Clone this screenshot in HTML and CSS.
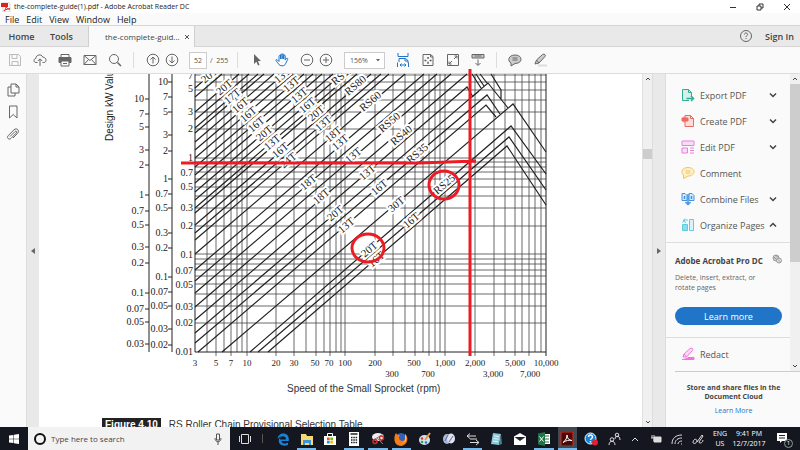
FILE: index.html
```
<!DOCTYPE html>
<html lang="en">
<head>
    <meta charset="UTF-8">
    <meta name="viewport" content="width=device-width, initial-scale=1.0">
    <title>the-complete-guide(1).pdf - Adobe Acrobat Reader DC</title>
    <link rel="stylesheet" href="styles.css">
</head>
<body>
    <header class="titlebar">
        <svg class="app-icon" viewBox="0 0 10 10"><path d="M2 0h5l2 2v8H2z" fill="#fff" stroke="#bbb" stroke-width=".6"/><path d="M0 1h7v4H0z" fill="#e2231a"/><path d="M3 9c2-2 2-4 2-5 0 2 2 3 4 3-2 0-4 0-6 2z" fill="none" stroke="#e2231a"/></svg>
        <span class="window-title">the-complete-guide(1).pdf - Adobe Acrobat Reader DC</span>
        <div class="window-buttons">
            <button aria-label="Minimize"><svg viewBox="0 0 8 8"><path d="M1 4.500h6"/></svg></button>
            <button aria-label="Restore"><svg viewBox="0 0 8 8"><path d="M1 3h4v4H1zM3 3V1h4v4H5"/></svg></button>
            <button aria-label="Close"><svg viewBox="0 0 8 8"><path d="M1 1l6 6M7 1L1 7"/></svg></button>
        </div>
    </header>

    <nav class="menubar">
        <button>File</button>
        <button>Edit</button>
        <button>View</button>
        <button>Window</button>
        <button>Help</button>
    </nav>

    <div class="tabbar">
        <button class="tab-home">Home</button>
        <button class="tab-tools">Tools</button>
        <div class="tab-doc">
            <span>the-complete-guid...</span>
            <button aria-label="Close tab"><svg viewBox="0 0 6 6"><path d="M1 1l4 4M5 1L1 5"/></svg></button>
        </div>
        <button class="help" aria-label="Help"><svg viewBox="0 0 14 14"><circle cx="7" cy="7" r="5.500"/><path d="M5.400 5.500c0-2 3.200-2 3.200 0 0 1.200-1.600 1-1.600 2.500M7 9v1"/></svg></button>
        <button class="sign-in">Sign In</button>
    </div>

    <div class="toolbar">
        <div class="group wide">
            <button class="disabled" aria-label="Save"><svg viewBox="0 0 14 14"><path d="M1.500 1.500h9l2 2v9h-11zM4 1.500v4h5v-4M4 12.500v-4h6v4"/></svg></button>
            <button aria-label="Upload"><svg viewBox="0 0 14 14"><path d="M4.500 9.500H3C.4 9.500.2 6 2.800 5.500 3 1.500 8.500.5 9.800 4.200c4 0 4.200 5.300 1 5.300H9.500M7 13V6M4.800 8L7 5.800 9.200 8"/></svg></button>
            <button aria-label="Print"><svg viewBox="0 0 14 14"><path d="M3 4V1.500h8V4" /><path d="M1 4.500h12v5H1z" fill="#666"/><path d="M3 8h8v5H3z" fill="#fafafa"/><path d="M5 10.500h4"/></svg></button>
            <button aria-label="Email"><svg viewBox="0 0 14 14"><path d="M1 2.500h12v9H1zM1 2.500l6 5 6-5M1 11.500l4.500-5M13 11.500l-4.500-5"/></svg></button>
            <button aria-label="Find"><svg viewBox="0 0 14 14"><circle cx="6" cy="6" r="4.500"/><path d="M9.500 9.500l3.500 3.500" stroke-width="1.500"/></svg></button>
        </div>
        <span class="sep"></span>
        <div class="group">
            <button aria-label="Previous page"><svg viewBox="0 0 14 14"><circle cx="7" cy="7" r="5.800"/><path d="M7 10.500v-6M4.500 6.500L7 4l2.500 2.500"/></svg></button>
            <button aria-label="Next page"><svg viewBox="0 0 14 14"><circle cx="7" cy="7" r="5.800"/><path d="M7 3.500v6M4.500 7.500L7 10l2.500-2.500"/></svg></button>
        </div>
        <input class="page-number" type="text" value="52" aria-label="Page number">
        <span class="page-count">/&nbsp; 255</span>
        <span class="sep"></span>
        <div class="group wide">
            <button aria-label="Select"><svg viewBox="0 0 14 14"><path d="M4 1l7 7H8l1.500 4-1.500.6L6.400 8.800 4 11z" fill="#666" stroke="none"/></svg></button>
            <button class="active" aria-label="Hand"><svg viewBox="0 0 14 14"><path d="M4 8.500V3.200c0-1 1.500-1 1.500 0V6 1.800c0-1 1.600-1 1.600 0V6 1.500c0-1 1.600-1 1.600 0V6 2.800c0-1 1.500-1 1.500 0V7l1-1.500c1-.8 1.900 0 1.500.8l-2.200 4.500c-.8 1.600-1.500 2-3.500 2C4 12.800 3.600 11 1 7.500.6 6.600 1.600 6 2.500 7z" /></svg></button>
        </div>
        <div class="group magnify">
            <button aria-label="Zoom out"><svg viewBox="0 0 14 14"><circle cx="7" cy="7" r="5.800"/><path d="M4 7h6"/></svg></button>
            <button aria-label="Zoom in"><svg viewBox="0 0 14 14"><circle cx="7" cy="7" r="5.800"/><path d="M4 7h6M7 4v6"/></svg></button>
        </div>
        <div class="zoom">
            <select aria-label="Zoom level"><option>156%</option></select>
            <svg viewBox="0 0 6 4"><path d="M1 1h4L3 3.500z"/></svg>
        </div>
        <div class="group wide view">
            <button class="active" aria-label="Fit width"><svg viewBox="0 0 14 14"><path d="M2 0v3.500h10V0M3 9V5.500h6.500l2.500 2V10M9 5.500V8h3M1.500 9.500V14M12.500 9.500V14M4 12h6M5.500 10.500L4 12l1.500 1.500M8.500 10.500L10 12l-1.500 1.500"/></svg></button>
            <button aria-label="Fit page"><svg viewBox="0 0 14 14"><path d="M2 1.500h7.500l2.500 2v9H2zM9.500 1.500V4H12M7 4v2M7 8.500v2.200M3.500 7.500h2M8.500 7.500h2"/><path d="M6 4.800h2M6 10h2M4.300 6.500v2M9.800 6.500v2"/></svg></button>
            <button aria-label="Full screen"><svg viewBox="0 0 14 14"><path d="M1.500 1.500h11v11h-11z"/><path d="M8 6l3-3M8.500 3H11v2.500M6 8l-3 3M3 8.500V11h2.500"/></svg></button>
            <button aria-label="Scrolling"><svg viewBox="0 0 14 14"><path d="M1 1.500h12v3.500H1z" fill="#ccc"/><path d="M3.500 3h7M7 6.500V12M4.500 10L7 12.500 9.500 10"/></svg></button>
        </div>
        <span class="sep"></span>
        <div class="group wide notes">
            <button aria-label="Add comment"><svg viewBox="0 0 14 14"><path d="M7 2c8 0 8 8.500 0 8.500L3 13v-3C-1 8 .5 2 7 2z" fill="#ccc"/><path d="M4.500 5h5M4.500 7h5"/></svg></button>
            <button aria-label="Highlight"><svg viewBox="0 0 14 14"><path d="M2 11l1.500-4L9.500 1.500c2-1 3.500.5 2.500 2L6 10z" fill="#ccc"/><path d="M3.500 7L6 10"/><path d="M5 12.500h9" stroke="#ddd" stroke-width="2"/></svg></button>
        </div>
    </div>

    <main class="workspace">
        <aside class="rail">
            <button aria-label="Page thumbnails"><svg viewBox="0 0 14 14"><path d="M5 1h5l3 3v6H5zM10 1v3h3M5 4H2v9h7v-3"/></svg></button>
            <button aria-label="Bookmarks"><svg viewBox="0 0 14 14"><path d="M3.500 1h7.500v12L7.200 9.500 3.500 13z"/></svg></button>
            <button aria-label="Attachments"><svg viewBox="0 0 14 14"><path d="M4 9.500l5-5c1.200-1 2.400.3 1.400 1.400L5 11.400C2.800 13.300.3 10.800 2.200 8.600L8 2.800c2.800-2.500 6 .7 3.600 3.500L7 11" /></svg></button>
        </aside>
        <button class="collapse" aria-label="Open navigation pane"><svg viewBox="0 0 4 6"><path d="M4 0v6L0 3z"/></svg></button>

        <article class="page">
            <svg class="chart" viewBox="100 74 460 306" role="img" aria-label="RS Roller Chain Provisional Selection Table">
                <defs><clipPath id="visible"><path d="M100 74h460v306H100z"/></clipPath></defs>
                <path class="grid" d="M207 74V352M216 74V356M224 74V352M231 74V356M237 74V352M242 74V352M247 74V356M276 74V356M294 74V356M306 74V352M316 74V356M324 74V352M330 74V356M336 74V352M341 74V352M345 74V356M375 74V356M393 74V356M405 74V352M415 74V356M423 74V352M429 74V356M435 74V352M440 74V352M445 74V356M475 74V356M494 74V356M505 74V352M515 74V356M522 74V352M529 74V356M535 74V352M541 74V352"/>
                <path class="grid" d="M195 75H546M195 82H546M195 90H546M195 100H546M195 112H546M195 129H546M195 158H546M195 162H546M195 167H546M195 172H546M195 179H546M195 187H546M195 196H546M195 208H546M195 226H546M195 254H546M195 259H546M195 264H546M195 270H546M195 276H546M195 284H546M195 294H546M195 306H546M195 323H546"/>
                <path class="axis" d="M195 74V352H546V74M149 74V352M172 74V352M546 352V356"/>
                <path class="axis" d="M145 99h4M145 114h4M145 127h4M145 150h4M145 165h4M145 195h4M145 211h4M145 225h4M145 247h4M145 263h4M145 293h4M145 309h4M145 322h4M145 344h4M168 82h4M168 97h4M168 112h4M168 135h4M168 151h4M168 179h4M168 194h4M168 208h4M168 233h4M168 248h4M168 277h4M168 292h4M168 306h4M168 329h4M168 345h4"/>
                <path class="curve" d="M195 88L211 74M195 97L222 74M195 112L239 74M195 120L249 74M195 128L258 74M195 133L264 74M195 142L274 74M195 150L284 74M195 158L293 74M195 167L304 74M195 175L313 74M195 183L322 74M195 192L333 74M195 200L342 74M195 208L351 74M195 213L357 74M195 225L371 74M195 233L381 74M195 240L389 74M195 254L405 74M195 270L424 74M195 281L437 74M195 293L451 74M195 307L467 74"/>
                <path class="curve" d="M195 320L467 87L473 97M195 333L488 83L508 108M472 97L479 91M195 343L487 95L500 114M198 352L486 105L496 117M222 352L513 104L546 152M250 352L511 126L546 174M258 352L509 137L546 190M268 352L507 146L546 205M472 74L481 88M476 74L484 86M480 74L487 83M491 74L501 90V99"/>

                <g class="diagonal" clip-path="url(#visible)">
                    <text transform="translate(209 75) rotate(-40)">20T</text>
                    <text transform="translate(224 87) rotate(-40)">20T</text>
                    <text transform="translate(232 96) rotate(-40)">17T</text>
                    <text transform="translate(240 105) rotate(-40)">16T</text>
                    <text transform="translate(248 114) rotate(-40)">16T</text>
                    <text transform="translate(256 124) rotate(-40)">16T</text>
                    <text transform="translate(264 133) rotate(-40)">20T</text>
                    <text transform="translate(272 142) rotate(-40)">13T</text>
                    <text transform="translate(280 150) rotate(-40)">16T</text>
                    <text transform="translate(288 160) rotate(-40)">24T</text>
                    <text transform="translate(282 75) rotate(-40)">13T</text>
                    <text transform="translate(291 84) rotate(-40)">13T</text>
                    <text transform="translate(299 95) rotate(-40)">13T</text>
                    <text transform="translate(307 105) rotate(-40)">16T</text>
                    <text transform="translate(316 113) rotate(-40)">20T</text>
                    <text transform="translate(323 123) rotate(-40)">13T</text>
                    <text transform="translate(333 134) rotate(-40)">18T</text>
                    <text transform="translate(340 142) rotate(-40)">13T</text>
                    <text transform="translate(353 155) rotate(-40)">13T</text>
                    <text transform="translate(344 73) rotate(-40)">RS100</text>
                    <text transform="translate(355 85) rotate(-40)">RS80</text>
                    <text transform="translate(370 101) rotate(-40)">RS60</text>
                    <text transform="translate(389 122) rotate(-40)">RS50</text>
                    <text transform="translate(401 135) rotate(-40)">RS40</text>
                    <text transform="translate(417 153) rotate(-40)">RS35</text>
                    <text transform="translate(444 184) rotate(-40)">RS25</text>
                    <text transform="translate(308 182) rotate(-40)">18T</text>
                    <text transform="translate(321 196) rotate(-40)">18T</text>
                    <text transform="translate(335 213) rotate(-40)">20T</text>
                    <text transform="translate(346 225) rotate(-40)">13T</text>
                    <text transform="translate(367 172) rotate(-40)">13T</text>
                    <text transform="translate(379 187) rotate(-40)">16T</text>
                    <text transform="translate(396 204) rotate(-40)">30T</text>
                    <text transform="translate(411 220) rotate(-40)">16T</text>
                    <text transform="translate(376 259) rotate(-40)">16T</text>
                    <text transform="translate(369 249) rotate(-40)">20T</text>
                </g>

                <g class="scale">
                    <text x="144" y="102">10</text><text x="144" y="117">7</text><text x="144" y="130">5</text><text x="144" y="153">3</text><text x="144" y="168">2</text><text x="144" y="198">1</text><text x="144" y="214">0.7</text><text x="144" y="228">0.5</text><text x="144" y="250">0.3</text><text x="144" y="266">0.2</text><text x="144" y="296">0.1</text><text x="144" y="312">0.07</text><text x="144" y="325">0.05</text><text x="144" y="347">0.03</text>
                    <text x="168" y="85">10</text><text x="168" y="100">7</text><text x="168" y="115">5</text><text x="168" y="138">3</text><text x="168" y="154">2</text><text x="168" y="182">1</text><text x="168" y="197">0.7</text><text x="168" y="211">0.5</text><text x="168" y="236">0.3</text><text x="168" y="251">0.2</text><text x="168" y="280">0.1</text><text x="168" y="295">0.07</text><text x="168" y="309">0.05</text><text x="168" y="332">0.03</text><text x="168" y="348">0.02</text>
                    <text x="193" y="79" clip-path="url(#visible)">7</text><text x="193" y="92">5</text><text x="193" y="115">3</text><text x="193" y="132">2</text><text x="193" y="161">1</text><text x="193" y="176">0.7</text><text x="193" y="190">0.5</text><text x="193" y="211">0.3</text><text x="193" y="229">0.2</text><text x="193" y="258">0.1</text><text x="193" y="274">0.07</text><text x="193" y="288">0.05</text><text x="193" y="310">0.03</text><text x="193" y="326">0.02</text><text x="193" y="355">0.01</text>
                </g>
                <g class="speeds">
                    <text x="195" y="366">3</text><text x="216" y="366">5</text><text x="231" y="366">7</text><text x="247" y="366">10</text><text x="276" y="366">20</text><text x="294" y="366">30</text><text x="315" y="366">50</text><text x="329" y="366">70</text><text x="345" y="366">100</text><text x="375" y="366">200</text><text x="414" y="366">500</text><text x="445" y="366">1,000</text><text x="475" y="366">2,000</text><text x="515" y="366">5,000</text><text x="546" y="366">10,000</text>
                    <text x="392" y="377">300</text><text x="428" y="377">700</text><text x="493" y="377">3,000</text><text x="530" y="377">7,000</text>
                </g>
                <g clip-path="url(#visible)"><text class="axis-title" transform="translate(113 141) rotate(-90)">Design kW Value</text></g>

                <g class="marks">
                    <path d="M181 163H420L476 161M470 69V356"/>
                    <ellipse cx="444" cy="185" rx="15" ry="14"/>
                    <ellipse cx="368" cy="248" rx="16" ry="14"/>
                </g>
            </svg>
            <p class="speed-title">Speed of the Small Sprocket (rpm)</p>
            <p class="caption"><b>Figure 4.10</b>RS Roller Chain Provisional Selection Table</p>
        </article>

        <div class="scrollbar doc-scroll">
            <svg viewBox="0 0 6 4"><path d="M1 3l2-2 2 2"/></svg>
            <span class="thumb"></span>
            <svg viewBox="0 0 6 4"><path d="M1 1l2 2 2-2"/></svg>
        </div>
        <button class="collapse" aria-label="Close tools pane"><svg viewBox="0 0 4 6"><path d="M0 0v6l4-3z"/></svg></button>

        <aside class="tools">
            <div class="tools-body">
                <div class="tools-list">
                    <button class="tool">
                        <svg class="tool-icon" viewBox="0 0 14 14" stroke="#2fae8f" fill="#d5efe8"><path d="M8 12.500H1.500v-11h6l3 3V8M7.500 1.500v3h3"/><path d="M5.500 10.500H12M10 8l2.500 2.500L10 13" fill="none" stroke-width="1.500"/></svg>
                        <span>Export PDF</span><svg class="chevron" viewBox="0 0 8 6"><path d="M1 1.500l3 3 3-3"/></svg>
                    </button>
                    <button class="tool">
                        <svg class="tool-icon" viewBox="0 0 14 14" stroke="#ec6a60" fill="#fadedb"><path d="M4 1.500h5.500l3 3v8H4zM9.500 1.500v3h3"/><path d="M1 4h6v3H1zM3 2.500v6" fill="#ec6a60"/></svg>
                        <span>Create PDF</span><svg class="chevron" viewBox="0 0 8 6"><path d="M1 1.500l3 3 3-3"/></svg>
                    </button>
                    <button class="tool">
                        <svg class="tool-icon" viewBox="0 0 14 14" stroke="#e881dc" fill="#f9dcf5"><path d="M1 1h12v4.500H1zM1 8h5.500v5H1zM9 8h4M9 10.500h4M9 13h4"/></svg>
                        <span>Edit PDF</span><svg class="chevron" viewBox="0 0 8 6"><path d="M1 1.500l3 3 3-3"/></svg>
                    </button>
                    <button class="tool">
                        <svg class="tool-icon" viewBox="0 0 14 14" stroke="#f6c453" fill="#fdf0cf"><path d="M7 1.500c8 0 8 8.500 0 8.500L2.500 12.500V9C-1 6 1.500 1.500 7 1.500zM4.500 5h5M4.500 7h5"/></svg>
                        <span>Comment</span>
                    </button>
                    <button class="tool">
                        <svg class="tool-icon" viewBox="0 0 14 14" stroke="#4593e0" fill="#d9e9fa"><path d="M6 8.500H1v-7h3l2 2zM8 8.500h5v-5l-2-2H8z"/><path d="M7 2v10M4.500 10L7 12.500 9.500 10M3.500 4v3M10.500 4v3" fill="none" stroke-width="1.500"/></svg>
                        <span>Combine Files</span><svg class="chevron" viewBox="0 0 8 6"><path d="M1 1.500l3 3 3-3"/></svg>
                    </button>
                    <button class="tool">
                        <svg class="tool-icon" viewBox="0 0 14 14" stroke="#5fcde0" fill="#d8f4f8"><path d="M8.500 1.500h4v11h-4z"/><path d="M1.500 6.500h5v6h-5z" fill="#8cdde9"/><path d="M1.500 4.500L4 2h3M4 .5L2 3l3 1.500" fill="none"/></svg>
                        <span>Organize Pages</span><svg class="chevron" viewBox="0 0 8 6"><path d="M1 4.500l3-3 3 3"/></svg>
                    </button>
                </div>
                <section class="promo">
                    <div class="promo-head">
                        <h2>Adobe Acrobat Pro DC</h2>
                        <svg viewBox="0 0 10 10"><circle cx="4" cy="4" r="3" fill="#ccc"/><circle cx="7" cy="6.500" r="2.500" fill="#ddd"/><path d="M1.500 2.500l3 3M4 1.500l2 2M6 5.500l2 2"/></svg>
                    </div>
                    <p>Delete, insert, extract, or rotate pages</p>
                    <button class="learn">Learn more</button>
                </section>
                <button class="tool redact">
                    <svg class="tool-icon" viewBox="0 0 14 14" stroke="#f274dc" fill="#fbdcf6"><path d="M2 10l1-3 6-5.500c2-1 3.500.5 2.500 2L5.500 10zM3 7l2.500 3"/><path d="M7 10.500h6v2H1" fill="#f274dc"/></svg>
                    <span>Redact</span>
                </button>
            </div>
            <div class="scrollbar tools-scroll">
                <svg viewBox="0 0 6 4"><path d="M1 3l2-2 2 2"/></svg>
                <span class="thumb"></span>
                <svg viewBox="0 0 6 4"><path d="M1 1l2 2 2-2"/></svg>
            </div>
            <footer class="cloud">
                <strong>Store and share files in the Document Cloud</strong>
                <a href="#">Learn More</a>
            </footer>
        </aside>
    </main>

    <footer class="taskbar">
        <button class="start" aria-label="Start"><svg viewBox="0 0 10 10"><path d="M0 1.500l4.500-.6v3.800H0zM5 .8L10 0v4.700H5zM0 5.200h4.500V9L0 8.400zM5 5.200h5V10l-5-.8z" fill="#fff"/></svg></button>
        <label class="search">
            <svg viewBox="0 0 14 14"><circle cx="7" cy="7" r="5" fill="none" stroke="#111" stroke-width="2"/></svg>
            <input type="text" placeholder="Type here to search" aria-label="Type here to search">
            <svg viewBox="0 0 14 14"><path d="M5.500 2h3v6h-3zM4 6c0 5 6 5 6 0M7 10v3" fill="none" stroke="#555"/></svg>
        </label>
        <button class="task-view" aria-label="Task view"><svg viewBox="0 0 14 14"><path d="M3.500 2.500h7v9h-7zM1.500 4v6M12.500 4v6" fill="none" stroke="#ddd"/></svg></button>
        <span class="task-sep"></span>
        <div class="apps">
            <button aria-label="Edge"><svg viewBox="0 0 14 14"><path d="M4 7.500h6C10 3 4 3.500 1.500 7 2 0 12.500-.5 12.800 7v2H5.500c.5 3 4.500 3 6.500 1.500v2.300C8 15 1.500 13 3 7.500 3.200 6 5 5 6 5 4.500 5.500 4 6.500 4 7.500z" fill="#1683d8"/></svg></button>
            <button class="open" aria-label="File Explorer"><svg viewBox="0 0 14 14"><path d="M1 2h5l1 2h6v9H1z" fill="#f8d775"/><path d="M3 8h8v5H9v-2H5v2H3z" fill="#3b97d8"/></svg></button>
            <button aria-label="Store"><svg viewBox="0 0 14 14"><path d="M4.500 4V1.500h5V4" fill="none" stroke="#fff"/><path d="M1 4h12v9H1z" fill="#fff"/><path d="M4 5.500h2.700v2.700H4z" fill="#f25022"/><path d="M7.300 5.500H10v2.700H7.300z" fill="#7fba00"/><path d="M4 8.800h2.700v2.700H4z" fill="#00a4ef"/><path d="M7.300 8.800H10v2.700H7.300z" fill="#ffb900"/></svg></button>
            <button class="open" aria-label="Calculator"><svg viewBox="0 0 14 14"><path d="M2 0h10v14H2z" fill="#fff"/><path d="M3.500 2h7M4 5.500h1.500M6.300 5.500h1.500M8.600 5.500h1.500M4 8h1.500M6.300 8h1.500M8.600 8h1.500M4 10.500h1.500M6.300 10.500h1.500M8.600 10.500h1.500" stroke="#222" stroke-width="1.500"/></svg></button>
            <button class="open" aria-label="Snipping Tool"><svg viewBox="0 0 14 14"><ellipse cx="7" cy="5" rx="6" ry="4" fill="#eee"/><path d="M2 8l9-5M6 6l6 6" stroke="#888"/><circle cx="4" cy="9.500" r="2" fill="none" stroke="#d82c2c" stroke-width="1.500"/><circle cx="10.500" cy="6" r="2" fill="none" stroke="#d82c2c" stroke-width="1.500"/></svg></button>
            <button class="open" aria-label="Firefox"><svg viewBox="0 0 14 14"><circle cx="7" cy="7" r="6" fill="#3260bc"/><path d="M2 1c1 2 2 2 4 2-2 2-1 6 2 6 2 0 3-1 3-3 1 0 1-2 0-4 4 3 3 11-4 12C0 14-1 6 2 1z" fill="#f57c18"/><path d="M11 2c3 4 1 9-4 10 3-1 5-4 4-7z" fill="#ffd23e"/></svg></button>
            <button aria-label="Paint"><svg viewBox="0 0 14 14"><ellipse cx="6.500" cy="8" rx="5.500" ry="5" fill="#cfe3f0"/><circle cx="4" cy="6.500" r="1.300" fill="#d83b32"/><circle cx="4" cy="10" r="1.300" fill="#3c9b45"/><circle cx="8" cy="10.500" r="1.300" fill="#2f75c8"/><path d="M7 8l5-7" stroke="#e59a3c" stroke-width="2"/></svg></button>
            <button aria-label="Photos"><svg viewBox="0 0 14 14"><ellipse cx="5" cy="7" rx="4" ry="5" fill="#a9b9d7"/><ellipse cx="9" cy="6.500" rx="4" ry="5" fill="#dfe2ee"/><path d="M3 9l3-6M7 10l4-6" stroke="#5a6795"/></svg></button>
            <button class="open" aria-label="Converter"><svg viewBox="0 0 14 14"><path d="M1 4h9M1 4l3-2.500M1 4l3 2.500M4 7h7M13 10.500H4M13 10.500L10 8M13 10.500L10 13" fill="none" stroke="#ddd"/></svg></button>
            <button aria-label="Notepad"><svg viewBox="0 0 14 14"><path d="M4 1l8 1-2 11-8-1z" fill="#8bcadb"/><path d="M5 4l5 .6M4.500 6.500l5 .6M4 9l5 .6" stroke="#e6f5f8"/><path d="M12 2l1 10-3 1z" fill="#527b88"/></svg></button>
            <button aria-label="Mail"><svg viewBox="0 0 14 14"><path d="M1 4.500L7 1l6 3.500V13H1z" fill="#fff"/><path d="M1.500 5h11L7 9z" fill="#20242c"/></svg></button>
            <button class="open" aria-label="Excel"><svg viewBox="0 0 14 14"><path d="M6 2h7v10H6z" fill="#fff"/><path d="M8 4h4M8 7h4M8 10h4" stroke="#217346"/><path d="M1 1.500L8 0v14l-7-1.500z" fill="#217346"/><path d="M2.500 4.500l4 5M6.500 4.500l-4 5" stroke="#fff"/></svg></button>
            <button class="open current" aria-label="Acrobat Reader"><svg viewBox="0 0 14 14"><path d="M1 0h12v14H1z" fill="#4c0707" stroke="#d52b24"/><path d="M3 10.500c3-2 4-5 4-7.500 0 3 2 5.500 5 5.500-3-.8-6 0-9 2z" fill="none" stroke="#fff"/></svg></button>
            <button aria-label="Get Help"><svg viewBox="0 0 14 14"><circle cx="6.500" cy="6.500" r="5.500" fill="#1683d8" stroke="#fff"/><path d="M4.500 5c0-3 4-2.500 4 0 0 1.500-2 1.500-2 3M6.500 9v1.500" fill="none" stroke="#fff" stroke-width="1.500"/><circle cx="11" cy="10.500" r="3" fill="#e3202b"/></svg></button>
        </div>
        <div class="tray">
            <button aria-label="People"><svg viewBox="0 0 14 14"><path d="M2 13c0-5 6-5 6 0M8 7c0-4 5-4 5 1" /><circle cx="5" cy="7.500" r="1.800"/><circle cx="10" cy="3" r="1.800"/></svg></button>
            <button aria-label="Show hidden icons"><svg viewBox="0 0 14 14"><path d="M4 9l3-3 3 3"/></svg></button>
            <button aria-label="Battery"><svg viewBox="0 0 14 14"><path d="M5 5h7v5H5z" fill="#ddd"/><path d="M3 3v3M5 3v3M2 6h4v2H4"/></svg></button>
            <button aria-label="Wi-Fi"><svg viewBox="0 0 14 14"><path d="M2 12C2 6 6 3 12 3M5 12c0-4 3-6 7-6M8 12c0-2 2-3 4-3M11 12h1"/></svg></button>
            <button aria-label="Pen"><svg viewBox="0 0 14 14"><path d="M2 10c1-4 4-3 4-1s-4 4-4 1zM6 10l5-7 1 1-4 6c0 2 4 1 4-2"/></svg></button>
        </div>
        <div class="lang"><span>ENG</span><span>US</span></div>
        <div class="clock"><span>9:41 PM</span><span>12/7/2017</span></div>
        <button class="notify" aria-label="Notifications"><svg viewBox="0 0 14 14"><path d="M1 1h10v8H6l-2 2V9H1z" fill="#fff"/><path d="M3 3.500h6M3 6h6" stroke="#222"/></svg><span class="badge">1</span></button>
    </footer>
</body>
</html>
```
FILE: styles.css
```
* {
    box-sizing: border-box;
}
body {
    margin: 0;
    height: 100vh;
    display: flex;
    flex-direction: column;
    overflow: hidden;
    background: #fafafa;
    color: #444;
    font-family: "Open Sans", "Noto Sans", sans-serif;
    font-size: 9px;
}
button {
    margin: 0;
    padding: 0;
    border: none;
    background: none;
    color: inherit;
    font: inherit;
    display: flex;
    align-items: center;
    justify-content: center;
}
p, h2 {
    margin: 0;
}
svg {
    display: block;
    flex: none;
}

/* title and menu */
.titlebar {
    display: flex;
    align-items: center;
    height: 13px;
    padding-left: 1px;
    background: #fff;
    color: #222;
}
.app-icon {
    width: 10px;
    height: 10px;
    margin-right: 3px;
}
.window-title {
    flex: 1;
    font-size: 7px;
}
.window-buttons {
    display: flex;
}
.window-buttons button {
    width: 27px;
}
.window-buttons svg {
    width: 8px;
    height: 8px;
    fill: none;
    stroke: #333;
}
.menubar {
    display: flex;
    gap: 7px;
    height: 12px;
    padding-left: 5px;
    color: #222;
}

/* tabs */
.tabbar {
    display: flex;
    height: 22px;
    background: #e9e9e9;
    border-top: 1px solid #d5d5d5;
    border-bottom: 1px solid #d5d5d5;
    font-weight: 600;
}
.tab-home {
    width: 43px;
}
.tab-tools {
    width: 37px;
}
.tab-doc {
    display: flex;
    align-items: center;
    justify-content: space-between;
    width: 107px;
    height: 21px;
    margin-left: 8px;
    padding: 0 4px 0 16px;
    background: #fafafa;
    border-left: 1px solid #d0d0d0;
    border-right: 1px solid #d0d0d0;
    font-size: 8px;
    font-weight: 400;
}
.tab-doc svg {
    width: 6px;
    height: 6px;
    stroke: #555;
}
.help {
    margin-left: auto;
    margin-right: 12px;
}
.help svg {
    width: 14px;
    height: 14px;
    fill: none;
    stroke: #666;
}
.sign-in {
    margin-right: 6px;
}

/* toolbar */
.toolbar {
    display: flex;
    align-items: center;
    height: 27px;
    padding-left: 2px;
    border-bottom: 1px solid #ddd;
}
.group {
    display: flex;
}
.group button {
    width: 19px;
    height: 24px;
}
.wide button {
    width: 25px;
}
.group svg, .rail svg {
    width: 14px;
    height: 14px;
    fill: none;
    stroke: #666;
}
.group .disabled svg {
    stroke: #bbb;
}
.group .active svg {
    stroke: #2175c9;
}
.sep {
    width: 1px;
    height: 16px;
    margin: 0 9px 0 6px;
    background: #ddd;
}
.page-number {
    width: 18px;
    height: 17px;
    margin-left: 8px;
    padding: 0;
    border: 1px solid #ccc;
    background: #fff;
    color: #555;
    font: 7px "Open Sans", sans-serif;
    text-align: center;
}
.page-count {
    width: 24px;
    padding-left: 3px;
    color: #555;
    font-size: 7px;
}
.page-count + .sep {
    margin-right: 6px;
}
.magnify {
    margin-left: 3px;
}
.zoom {
    display: grid;
    align-items: center;
    width: 41px;
    height: 17px;
    margin-left: 9px;
    border: 1px solid #ccc;
    background: #fff;
}
.zoom select, .zoom svg {
    grid-area: 1 / 1;
}
.zoom select {
    appearance: none;
    padding: 0 5px;
    border: none;
    background: none;
    color: #555;
    font: 7px "Open Sans", sans-serif;
}
.zoom svg {
    justify-self: end;
    width: 6px;
    height: 4px;
    margin-right: 3px;
    fill: #666;
    pointer-events: none;
}
.view {
    margin-left: 5px;
}
.notes {
    margin-left: -4px;
}

/* workspace */
.workspace {
    flex: 1;
    display: flex;
    min-height: 0;
}
.rail {
    display: flex;
    flex-direction: column;
    align-items: center;
    gap: 8px;
    width: 26px;
    padding-top: 9px;
}
.collapse {
    width: 13px;
    background: #e9e9e9;
    border-left: 1px solid #ddd;
}
.collapse svg {
    width: 4px;
    height: 6px;
    fill: #666;
}
.page {
    flex: 1;
    min-width: 0;
    padding-left: 61px;
    background: #fff;
    color: #333;
    font: 10px/14px "Liberation Sans", sans-serif;
}
.chart {
    width: 460px;
    overflow: visible;
}
.grid {
    fill: none;
    stroke: #444;
    stroke-width: 0.8;
}
.axis {
    fill: none;
    stroke: #222;
}
.curve {
    fill: none;
    stroke: #222;
    stroke-width: 1.2;
}
.chart text {
    font-family: "Liberation Serif", serif;
    fill: #222;
}
.diagonal text {
    font-size: 11px;
    text-anchor: middle;
    dominant-baseline: central;
    paint-order: stroke;
    stroke: #fff;
    stroke-width: 4;
}
.scale text {
    font-size: 10px;
    text-anchor: end;
}
.speeds text {
    font-size: 9px;
    text-anchor: middle;
}
.chart .axis-title {
    font-family: "Liberation Sans", sans-serif;
    font-size: 10px;
}
.marks {
    fill: none;
    stroke: #ed1c24;
    stroke-width: 3;
}
.speed-title {
    padding: 2px 0 0 187px;
}
.caption {
    display: flex;
    gap: 8px;
    margin-top: 22px;
    padding-left: 2px;
}
.caption b {
    padding: 0 3px;
    background: #222;
    color: #fff;
}

/* scrollbars */
.scrollbar {
    display: flex;
    flex-direction: column;
    align-items: center;
    width: 10px;
    background: #f0f0f0;
}
.scrollbar svg {
    width: 6px;
    height: 4px;
    margin: 3px 0;
    fill: none;
    stroke: #444;
}
.scrollbar svg:last-child {
    margin-top: auto;
}
.thumb {
    width: 100%;
    background: #cdcdcd;
}
.doc-scroll {
    border-left: 1px solid #e0e0e0;
}
.doc-scroll .thumb {
    height: 10px;
    margin-top: 65px;
}
.tools-scroll .thumb {
    flex: 0 0 178px;
}

/* tools panel */
.tools {
    display: grid;
    grid-template: 1fr 56px / 1fr 10px;
    width: 135px;
    border-left: 1px solid #ddd;
}
.tools-body {
    overflow: hidden;
}
.tools-list {
    padding: 8px 0 4px;
}
.tool {
    width: 100%;
    height: 26px;
    padding: 0 13px 0 15px;
    color: #555;
}
.tool span {
    flex: 1;
    text-align: left;
    white-space: nowrap;
}
.tool-icon {
    width: 14px;
    height: 14px;
    margin-right: 5px;
}
.chevron {
    width: 8px;
    height: 6px;
    fill: none;
    stroke: #444;
    stroke-width: 1.5;
}
.promo {
    height: 96px;
    padding: 11px 8px 0 9px;
    border-top: 1px solid #ddd;
    border-bottom: 1px solid #ddd;
}
.promo-head {
    display: flex;
    justify-content: space-between;
    height: 19px;
}
.promo h2 {
    font-size: 8px;
    font-weight: 700;
    line-height: 14px;
    white-space: nowrap;
}
.promo svg {
    width: 10px;
    height: 10px;
    fill: none;
    stroke: #999;
}
.promo p {
    width: 86px;
    height: 34px;
    color: #666;
    font-size: 7px;
    line-height: 10px;
}
.learn {
    width: 100%;
    height: 18px;
    border-radius: 9px;
    background: #2175c9;
    color: #fff;
}
.redact {
    height: 32px;
}
.cloud {
    grid-column: 1 / 3;
    display: flex;
    flex-direction: column;
    align-items: center;
    gap: 5px;
    margin-left: 9px;
    padding: 11px 8px 0 0;
    border-top: 1px solid #ccc;
    font-size: 7px;
    line-height: 9px;
    text-align: center;
}
.cloud a {
    color: #2175c9;
    text-decoration: none;
}

/* taskbar */
.taskbar {
    position: relative;
    z-index: 1;
    display: flex;
    align-items: stretch;
    height: 23px;
    background: #14171f;
    color: #fff;
}
.start {
    width: 28px;
}
.search {
    display: flex;
    align-items: center;
    width: 202px;
    padding: 0 5px;
    background: #f2f2f2;
}
.search input {
    flex: 1;
    min-width: 0;
    margin-left: 4px;
    padding: 0;
    border: none;
    background: none;
    font: 8px "Open Sans", sans-serif;
}
.search input::placeholder {
    color: #444;
}
.taskbar svg {
    width: 14px;
    height: 14px;
}
.taskbar .start svg {
    width: 10px;
    height: 10px;
}
.task-view {
    width: 29px;
}
.task-sep {
    width: 1px;
    height: 9px;
    margin: 7px 8px 0 3px;
    background: #555;
}
.apps {
    display: grid;
    grid-template-columns: repeat(14, 1fr);
    width: 332px;
}
.open {
    border-bottom: 2px solid #76b9ed;
    padding-top: 2px;
}
.apps button {
    margin: 0 2px;
}
.current {
    background: #45484f;
}
.tray {
    display: flex;
    flex: 1;
    justify-content: space-around;
}
.tray svg {
    fill: none;
    stroke: #ddd;
}
.lang, .clock {
    display: flex;
    flex-direction: column;
    justify-content: center;
    width: 24px;
    font-size: 7px;
    line-height: 10px;
    text-align: center;
}
.clock {
    width: 34px;
}
.notify {
    position: relative;
    width: 34px;
}
.badge {
    position: absolute;
    right: 7px;
    bottom: 2px;
    width: 9px;
    height: 9px;
    border: 1px solid #999;
    border-radius: 50%;
    background: #14171f;
    font-size: 6px;
    line-height: 7px;
}
```
